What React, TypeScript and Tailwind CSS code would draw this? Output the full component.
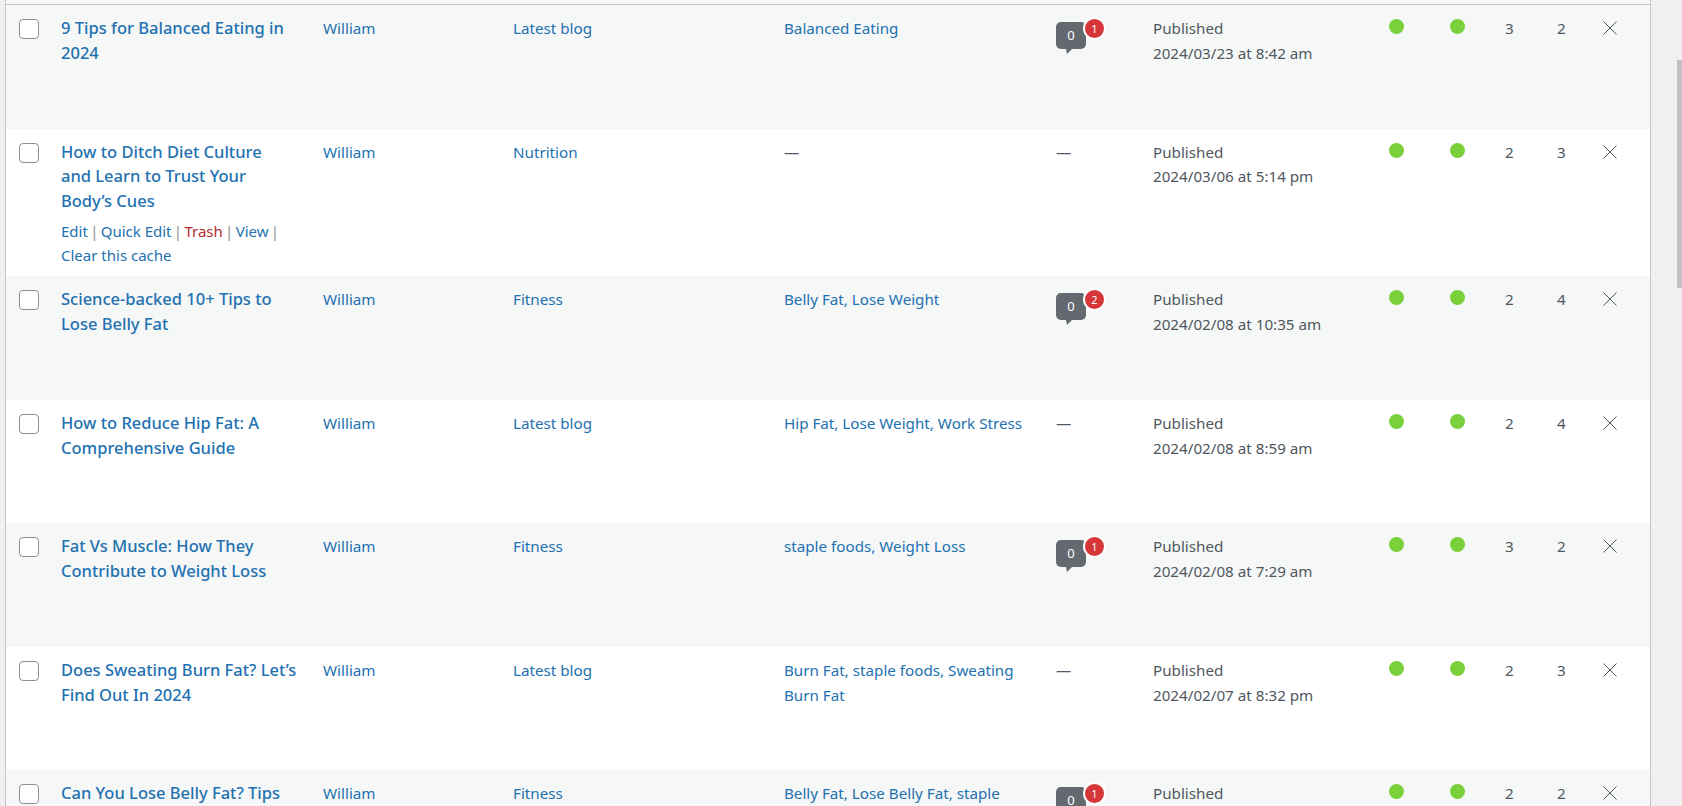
type Post = {
  title: string;
  category: string;
  tags: string;
  pending: number | null;
  date: string;
  internal: number;
  external: number;
  actions?: boolean;
};

const posts: Post[] = [
  { title: '9 Tips for Balanced Eating in\n2024', category: 'Latest blog', tags: 'Balanced Eating', pending: 1, date: '2024/03/23 at 8:42 am', internal: 3, external: 2 },
  { title: 'How to Ditch Diet Culture\nand Learn to Trust Your\nBody’s Cues', category: 'Nutrition', tags: '—', pending: null, date: '2024/03/06 at 5:14 pm', internal: 2, external: 3, actions: true },
  { title: 'Science-backed 10+ Tips to\nLose Belly Fat', category: 'Fitness', tags: 'Belly Fat, Lose Weight', pending: 2, date: '2024/02/08 at 10:35 am', internal: 2, external: 4 },
  { title: 'How to Reduce Hip Fat: A\nComprehensive Guide', category: 'Latest blog', tags: 'Hip Fat, Lose Weight, Work Stress', pending: null, date: '2024/02/08 at 8:59 am', internal: 2, external: 4 },
  { title: 'Fat Vs Muscle: How They\nContribute to Weight Loss', category: 'Fitness', tags: 'staple foods, Weight Loss', pending: 1, date: '2024/02/08 at 7:29 am', internal: 3, external: 2 },
  { title: 'Does Sweating Burn Fat? Let’s\nFind Out In 2024', category: 'Latest blog', tags: 'Burn Fat, staple foods, Sweating\nBurn Fat', pending: null, date: '2024/02/07 at 8:32 pm', internal: 2, external: 3 },
  { title: 'Can You Lose Belly Fat? Tips\nand Tricks', category: 'Fitness', tags: 'Belly Fat, Lose Belly Fat, staple\nfoods', pending: 1, date: '2024/02/05 at 6:11 pm', internal: 2, external: 2 },
];

function CommentBubble({ pending }: { pending: number }) {
  return (
    <div className="relative mt-[6px] h-[27px] w-[30px] rounded-[5px] bg-[#646970] text-center text-[13px] leading-[27px] text-white">
      0
      <span className="absolute left-[10px] top-full h-0 w-0 border-l-[1px] border-r-[5px] border-t-[5px] border-l-transparent border-r-transparent border-t-[#646970]" />
      <span className="absolute left-[27px] top-[-5px] h-[23px] w-[23px] rounded-full border-2 border-white bg-[#d63638] text-center text-[11px] leading-[19px] text-white">
        {pending}
      </span>
    </div>
  );
}

function Dot() {
  return <div className="mt-[4px] h-[15px] w-[15px] rounded-full bg-[#7ad03a]" />;
}

function Sep() {
  return <span className="mx-[2.3px] text-[#8c8f94]">|</span>;
}

export default function App() {
  return (
    <div className="flex h-[806px] w-full overflow-hidden bg-[#f0f0f1] font-['Noto_Sans',sans-serif] text-[15.2px] leading-[24.6px] text-[#50575e]">
      <div className="ml-[5px] h-full w-[1646px] shrink-0 overflow-hidden border-x border-[#c3c4c7]">
        <div className="h-[5px] border-b border-[#c3c4c7] bg-[#f6f7f7]" />
        <table className="w-[1644px] table-fixed border-collapse">
          <colgroup>
            <col className="w-[45px]" />
            <col className="w-[262px]" />
            <col className="w-[190px]" />
            <col className="w-[271px]" />
            <col className="w-[272px]" />
            <col className="w-[97px]" />
            <col className="w-[236px]" />
            <col className="w-[61px]" />
            <col className="w-[55px]" />
            <col className="w-[52px]" />
            <col className="w-[46px]" />
            <col className="w-[57px]" />
          </colgroup>
          <tbody>
            {posts.map((post, i) => (
              <tr key={post.title} className={i % 2 === 0 ? 'h-[123.5px] bg-[#f6f7f7]' : 'h-[123.5px] bg-white'}>
                <td className="px-[13px] pt-[10px] align-top">
                  <div className="mt-[4px] h-[20px] w-[20px] rounded-[4px] border border-[#8c8f94] bg-white" />
                </td>
                <td className="px-[10px] pb-[9px] pt-[11px] align-top">
                  <a className="block whitespace-pre-line text-[16.5px] font-medium text-[#2271b1]">{post.title}</a>
                  {post.actions && (
                    <div className="mt-[7px] text-[15px] leading-[23.6px] text-[#2271b1]">
                      <a>Edit</a>
                      <Sep />
                      <a>Quick Edit</a>
                      <Sep />
                      <a className="text-[#b32d2e]">Trash</a>
                      <Sep />
                      <a>View</a>
                      <Sep />
                      <br />
                      <a>Clear this cache</a>
                    </div>
                  )}
                </td>
                <td className="px-[10px] pt-[11px] align-top text-[#2271b1]">William</td>
                <td className="px-[10px] pt-[11px] align-top text-[#2271b1]">{post.category}</td>
                <td className={post.tags === '—' ? 'px-[10px] pt-[11px] align-top' : 'whitespace-pre-line px-[10px] pt-[11px] align-top text-[#2271b1]'}>
                  {post.tags}
                </td>
                <td className="px-[10px] pt-[11px] align-top">
                  {post.pending === null ? '—' : <CommentBubble pending={post.pending} />}
                </td>
                <td className="px-[10px] pt-[11px] align-top">
                  Published
                  <br />
                  {post.date}
                </td>
                <td className="px-[10px] pt-[10px] align-top"><Dot /></td>
                <td className="px-[10px] pt-[10px] align-top"><Dot /></td>
                <td className="px-[10px] pt-[11px] align-top">{post.internal}</td>
                <td className="px-[10px] pt-[11px] align-top">{post.external}</td>
                <td className="px-[10px] pt-[10px] align-top">
                  <svg width="14" height="14" viewBox="0 0 14 14" fill="none" stroke="#50575e" strokeWidth="1" className="mt-[6px]">
                    <path d="M0.5 0.5 13.5 13.5M13.5 0.5 0.5 13.5" />
                  </svg>
                </td>
              </tr>
            ))}
          </tbody>
        </table>
      </div>
      <div className="flex flex-1 justify-end">
        <div className="mt-[60px] h-[228px] w-[5px] bg-[#c1c1c1]" />
      </div>
    </div>
  );
}
